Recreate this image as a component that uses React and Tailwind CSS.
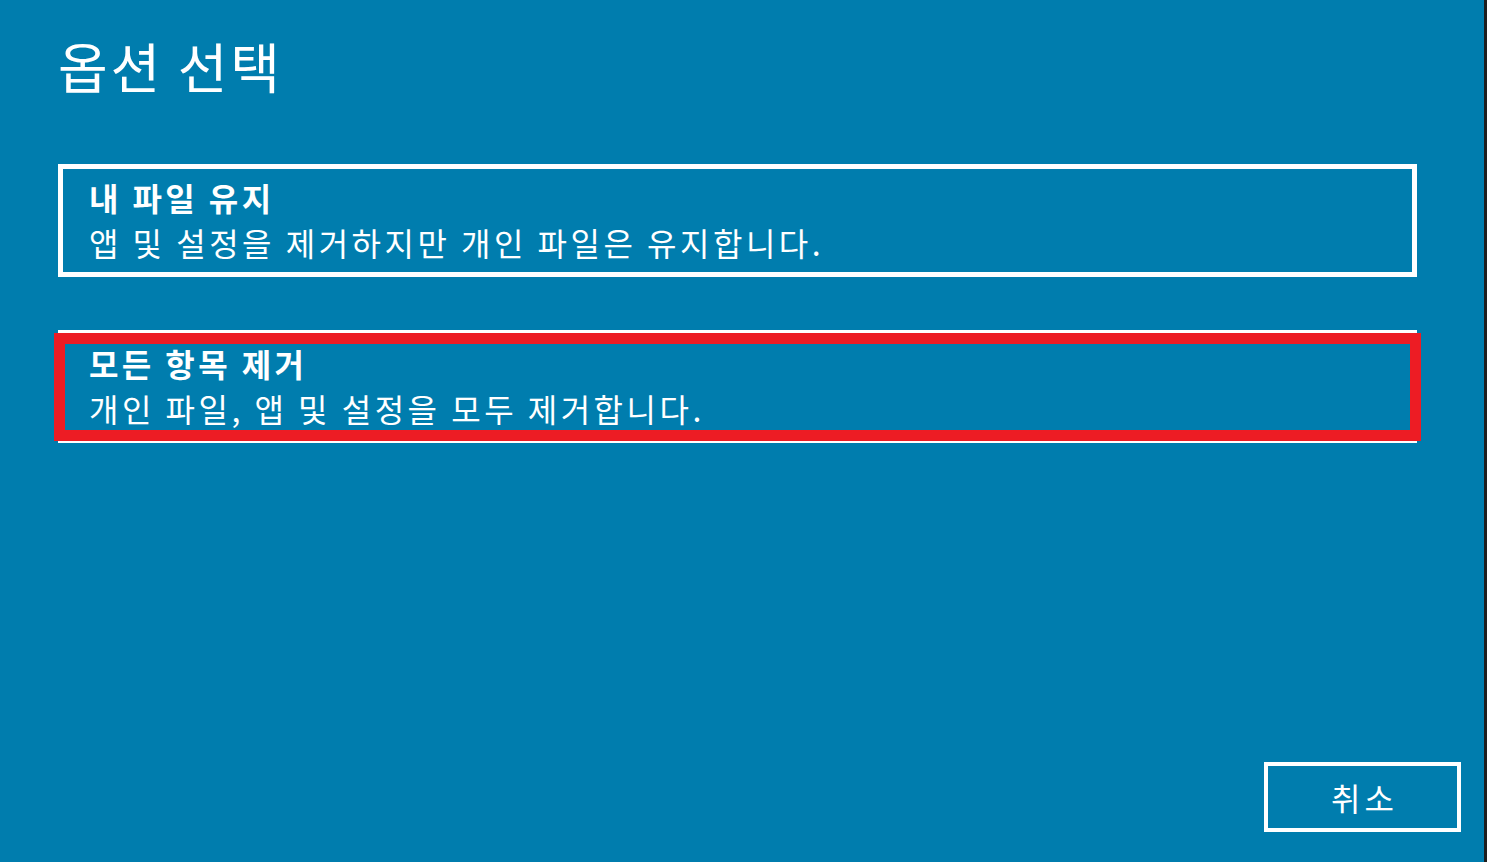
import React from "react";

function Option({ title, desc, selected }) {
  return (
    <div className="relative ml-[58px] w-[1359px] border-[5px] border-white pl-[26px] pt-[6px] pb-[7px] text-white">
      <div className="text-[32px] font-bold leading-[45px] tracking-[3.4px]">{title}</div>
      <div className="text-[32px] font-normal leading-[45px] tracking-[3.5px]">{desc}</div>
      {/* selection highlight drawn over the card */}
      {selected && (
        <div className="pointer-events-none absolute left-[-9px] right-[-9px] top-[-2px] bottom-[-3px] border-[11px] border-[#ed1c24]" />
      )}
    </div>
  );
}

export default function App() {
  return (
    <div className="flex h-[862px] w-full overflow-hidden bg-[#007dae] font-['Noto_Sans_CJK_KR','Noto_Sans',sans-serif]">
      <div className="flex flex-1 flex-col pt-[39px] pb-[30px]">
        <h1 className="ml-[58px] text-[54px] font-normal leading-none tracking-[2.8px] text-white">옵션 선택</h1>

        <div className="mt-[71px]">
          <Option title="내 파일 유지" desc="앱 및 설정을 제거하지만 개인 파일은 유지합니다." />
        </div>

        <div className="mt-[53px]">
          <Option title="모든 항목 제거" desc="개인 파일, 앱 및 설정을 모두 제거합니다." selected />
        </div>

        <div className="flex-1" />

        <div className="flex justify-end pr-[23px]">
          <button className="flex h-[70px] w-[197px] items-center justify-center border-4 border-white pl-[4px] text-[32px] leading-none tracking-[4px] text-white">
            취소
          </button>
        </div>
      </div>
      <div className="w-[3px] bg-[#1e1e1e]" />
    </div>
  );
}
